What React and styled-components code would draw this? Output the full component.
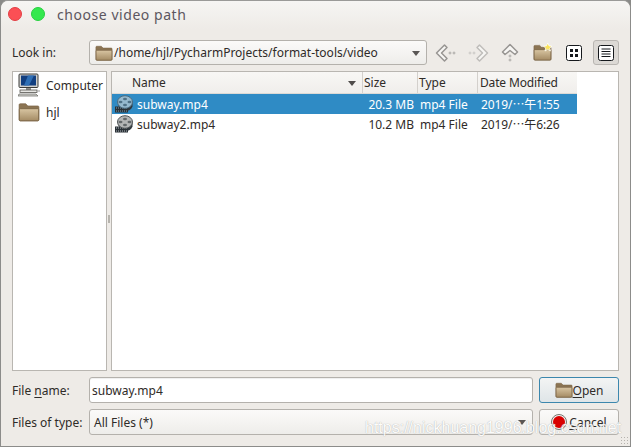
import React from 'react';
import styled, { createGlobalStyle } from 'styled-components';

const Global = createGlobalStyle`
  html, body { margin: 0; padding: 0; background: #8a8a88; }
  body { width: 631px; height: 447px; overflow: hidden; font-family: "Noto Sans", "Noto Sans CJK SC", sans-serif; }
`;
const Win = styled.div`
  position: relative; box-sizing: border-box; width: 631px; height: 447px;
  border: 1px solid #8c8c8a; border-top-color: #9a9a98; border-radius: 8px 8px 0 0;
  background: #eeebe7; color: #2f2b28; display: flex; flex-direction: column; overflow: hidden;
`;
const TitleBar = styled.div`
  height: 28px; box-sizing: border-box; flex: none; display: flex; align-items: center; padding: 0 0 2px 7px;
  background: linear-gradient(#f6f5f3, #eeebe7);
`;
const Light = styled.span`
  width: 14px; height: 14px; border-radius: 50%; flex: none; background: ${p => p.$c};
  box-sizing: border-box; border: 1px solid ${p => p.$b}; margin-right: 9px;
`;
const Title = styled.span`
  font-size: 14px; letter-spacing: 0.55px; color: #5c5660; margin-left: 3px;
`;
const Content = styled.div`
  flex: 1; padding: 11px 11px 0; display: flex; flex-direction: column; min-height: 0;
`;
const Row = styled.div`
  display: flex; align-items: center; margin-top: ${p => p.$mt || 0}px;
`;
const Label = styled.div`width: 77px; flex: none; font-size: 12px; u { text-underline-offset: 2px; }`;
const Combo = styled.div`
  box-sizing: border-box; height: ${p => p.$h || 25}px; width: ${p => p.$w}px; flex: none; display: flex; align-items: center;
  border: 1px solid #b4b1ac; border-radius: 3px; background: linear-gradient(#fbfaf9, #eeedea);
  padding-left: ${p => p.$pl || 5}px; font-size: 12px; position: relative;
`;
const PathText = styled.span`margin-left: 1px;`;
const Arrow = styled.span`
  position: absolute; right: 6px; top: 50%; margin-top: -2px; width: 0; height: 0;
  border-left: 4px solid transparent; border-right: 4px solid transparent; border-top: 5px solid #5a5755;
`;
const Tools = styled.div`display: flex; align-items: center; gap: 6px; margin-left: 6px;`;
const Tool = styled.div`
  box-sizing: border-box; width: 26px; height: 25px; display: flex; align-items: center; justify-content: center;
  ${p => p.$on && 'background:#dcd9d5;border:1px solid #b9b6b2;border-radius:3px;'}
`;
const Panes = styled.div`display: flex; height: 300px; margin-top: 6px; flex: none;`;
const Side = styled.div`
  box-sizing: border-box; width: 95px; flex: none; background: #fff; border: 1px solid #b9b6b1;
  display: flex; flex-direction: column; gap: 1px;
`;
const Splitter = styled.div`
  width: 4px; flex: none; display: flex; align-items: center; justify-content: center;
  &::before {
    content: ""; width: 2px; height: 8px; margin-top: -4px;
    background-image: radial-gradient(#b5b2ad 0.7px, transparent 1px); background-size: 2px 2px;
  }
`;
const Place = styled.div`
  height: 26px; display: flex; align-items: center; font-size: 12px; padding-left: 5px;
  svg { margin-right: 6px; flex: none; }
`;
const Main = styled.div`
  box-sizing: border-box; width: 508px; flex: none; background: #fff; border: 1px solid #b9b6b1;
`;
const Head = styled.div`
  width: 465px; height: 21px; display: flex; background: linear-gradient(#f8f7f5, #f0eeeb); border-bottom: 1px solid #dcdad6;
`;
const HCell = styled.div`
  box-sizing: border-box; width: ${p => p.$w}px; flex: none; font-size: 12px; display: flex; align-items: center; position: relative;
  padding-left: ${p => p.$pl}px; white-space: nowrap; letter-spacing: ${p => p.$ls || 0}px;
  ${p => p.$sep && 'border-right:1px solid #d3d0cc;'}
`;
const SortArrow = styled.span`
  position: absolute; right: 6px; top: 9px; width: 0; height: 0;
  border-left: 4px solid transparent; border-right: 4px solid transparent; border-top: 5px solid #4f4c4a;
`;
const FileRow = styled.div`
  width: 465px; height: 20px; display: flex; align-items: center; font-size: 12px;
  background: ${p => p.$sel ? '#2f8bc5' : 'transparent'}; color: ${p => p.$sel ? '#fff' : '#2f2b28'};
`;
const Cell = styled.div`
  box-sizing: border-box; width: ${p => p.$w}px; flex: none; white-space: nowrap; overflow: hidden;
  padding-left: ${p => p.$pl || 0}px; letter-spacing: ${p => p.$ls || 0}px;
  display: flex; align-items: center; justify-content: ${p => p.$r ? 'flex-end' : 'flex-start'};
  svg { margin-right: 4px; flex: none; }
`;
const Input = styled.div`
  box-sizing: border-box; width: 444px; height: 26px; flex: none; display: flex; align-items: center; background: #fff;
  border: 1px solid #b4b1ac; border-radius: 3px; padding-left: 2px; font-size: 12px; box-shadow: inset 0 1px 1px #eee;
`;
const Btn = styled.div`
  box-sizing: border-box; width: 80px; height: 26px; flex: none; margin-left: 6px; border-radius: 3px;
  border: 1px solid ${p => p.$def ? '#3c87ad' : '#b4b1ac'};
  background: ${p => p.$def ? 'linear-gradient(#f3f4f4, #dfe5e8)' : 'linear-gradient(#fbfaf9, #eeedea)'};
  display: flex; align-items: center; justify-content: center; font-size: 12px;
  u { text-underline-offset: 2px; }
  svg { margin-right: ${p => p.$gap}px; flex: none; }
`;
const Mark = styled.div`
  position: absolute; left: 364px; top: 418px; font-size: 16px; white-space: nowrap; opacity: 0.8;
  color: #fff; text-shadow: 0 0 1px #8c8c8c; font-family: "Liberation Sans", sans-serif;
`;
const Grip = styled.div`
  position: absolute; right: 1px; bottom: 1px; width: 9px; height: 9px;
  background-image: radial-gradient(#b5b2ad 0.8px, transparent 1px); background-size: 3px 3px;
`;

const Folder = ({ s = 20, star }) => (
  <svg width={s} height={s} viewBox="0 0 20 20">
    <defs>
      <linearGradient id="fld" x1="0" y1="0" x2="0" y2="1">
        <stop offset="0" stopColor="#d8c5a2" />
        <stop offset="1" stopColor="#a48b64" />
      </linearGradient>
    </defs>
    <path d="M1 17V3.500a1 1 0 0 1 1-1h5l2 2h9a1 1 0 0 1 1 1V17a1 1 0 0 1-1 1H2a1 1 0 0 1-1-1z" fill="#8b7453" stroke="#7a6445" strokeWidth=".6" />
    <path d="M2 7h16a.8.8 0 0 1 .8.8V17a1 1 0 0 1-1 1H2.200a1 1 0 0 1-1-1V7.800A.8.8 0 0 1 2 7z" fill="url(#fld)" stroke="#7a6445" strokeWidth=".8" />
    {star && <path d="M15.500 0l1.400 3 3.100.3-2.400 2 .8 3.100-2.900-1.700-2.900 1.700.8-3.100-2.400-2 3.100-.3z" fill="#fbe35a" stroke="#fff" strokeWidth=".8" />}
  </svg>
);
const Computer = () => (
  <svg width="22" height="24" viewBox="0 0 22 24">
    <rect x="1" y="1" width="19" height="13.500" rx="1" fill="#cfcfcc" stroke="#3d3d3a" />
    <rect x="3" y="2.500" width="15" height="10" fill="#123f80" />
    <path d="M6 12.500l4-10h6l-5 10z" fill="#2f6fb5" />
    <rect x="8" y="15" width="5" height="2" fill="#8f8f8c" />
    <rect x="2" y="17" width="17" height="2.500" fill="#e6e6e3" stroke="#55544f" strokeWidth=".8" />
    <path d="M1 21h17l2 2H0z" fill="#d5d5d1" stroke="#66655f" strokeWidth=".7" />
    <path d="M19.500 18h2.500" stroke="#999" />
  </svg>
);
const Film = ({ light }) => (
  <svg width="18" height="18" viewBox="0 0 18 18">
    <path d="M3 8h14.500v3.500c-1 3-4 4.500-7 4.500-4 0-7-3-7.500-8z" fill="#30383e" />
    <path d="M0 11.500h13v6H0z" fill="#2a3136" />
    <path d="M1 13h11M1 16h11" stroke={light ? '#7f9fb3' : '#b4bcc1'} strokeDasharray="1 1" />
    <ellipse cx="10" cy="7" rx="7.500" ry="6.300" fill={light ? '#95b8cd' : '#b3b5b5'} stroke={light ? '#4b6a7d' : '#4f5456'} />
    <ellipse cx="10" cy="4" rx="2" ry="1.300" fill={light ? '#4f7186' : '#63686a'} />
    <ellipse cx="5.500" cy="7" rx="2" ry="1.300" fill={light ? '#4f7186' : '#63686a'} />
    <ellipse cx="14.500" cy="7" rx="2" ry="1.300" fill={light ? '#4f7186' : '#63686a'} />
    <ellipse cx="10" cy="10" rx="2" ry="1.300" fill={light ? '#4f7186' : '#63686a'} />
  </svg>
);
const Nav = ({ d, dots, c }) => (
  <svg width="22" height="20" viewBox="0 0 22 20" fill="none">
    <path d={d} stroke={c} strokeWidth="1.500" strokeLinejoin="round" fill="#f7f6f4" />
    {dots.map(([x, y], i) => <circle key={i} cx={x} cy={y} r="1" stroke={c} strokeWidth=".7" fill="none" />)}
  </svg>
);
const Grid = () => (
  <svg width="16" height="16" viewBox="0 0 16 16">
    <rect x=".5" y=".5" width="15" height="15" rx="2" fill="#fff" stroke="#15181c" />
    <path d="M4 4h3v3H4zM9 4h3v3H9zM4 9h3v3H4zM9 9h3v3H9z" fill="#15181c" />
  </svg>
);
const List = () => (
  <svg width="16" height="16" viewBox="0 0 16 16">
    <rect x=".5" y=".5" width="15" height="15" rx="2" fill="#fff" stroke="#15181c" />
    <path d="M3.500 4h9M3.500 6.500h9M3.500 9h9M3.500 11.500h9" stroke="#15181c" strokeWidth="1.200" />
  </svg>
);
const Stop = () => (
  <svg width="16" height="16" viewBox="0 0 16 16">
    <circle cx="8" cy="8" r="7.500" fill="#f4f2f0" stroke="#77736e" />
    <circle cx="8" cy="8" r="6" fill="#d90000" />
  </svg>
);

export default function App() {
  return (
    <>
      <Global />
      <Win>
        <TitleBar>
          <Light $c="#fb4f55" $b="#e23e44" />
          <Light $c="#34e84e" $b="#27cf40" />
          <Title>choose video path</Title>
        </TitleBar>
        <Content>
          <Row>
            <Label>Look in:</Label>
            <Combo $w={338} $h={25}>
              <Folder s={18} />
              <PathText>/home/hjl/PycharmProjects/format-tools/video</PathText>
              <Arrow />
            </Combo>
            <Tools>
              <Tool><Nav c="#979592" d="M9.500 2l-8 8 8 8 2.500-2.500-5.500-5.500 5.500-5.500z" dots={[[15, 10], [19, 10]]} /></Tool>
              <Tool><Nav c="#bfbdba" d="M12.500 2l8 8-8 8-2.500-2.500 5.500-5.500-5.500-5.500z" dots={[[3, 10], [7, 10]]} /></Tool>
              <Tool><Nav c="#979592" d="M11 1.500l7.500 7.500-2.500 2.500-5-4-5 4-2.500-2.500z" dots={[[11, 13], [11, 17]]} /></Tool>
              <Tool><Folder s={19} star /></Tool>
              <Tool><Grid /></Tool>
              <Tool $on><List /></Tool>
            </Tools>
          </Row>
          <Panes>
            <Side>
              <Place><Computer />Computer</Place>
              <Place><Folder s={22} />hjl</Place>
            </Side>
            <Splitter />
            <Main>
              <Head>
                <HCell $w={251} $pl={20} $sep>Name<SortArrow /></HCell>
                <HCell $w={55} $pl={1} $sep>Size</HCell>
                <HCell $w={60} $pl={1} $sep>Type</HCell>
                <HCell $w={99} $pl={2} $ls={-0.15}>Date Modified</HCell>
              </Head>
              <FileRow $sel>
                <Cell $w={250} $pl={3}><Film light />subway.mp4</Cell>
                <Cell $w={52} $r>20.3 MB</Cell>
                <Cell $w={66} $pl={6}>mp4 File</Cell>
                <Cell $w={97} $pl={1} $ls={-0.1}>2019/⋯午1:55</Cell>
              </FileRow>
              <FileRow>
                <Cell $w={250} $pl={3}><Film />subway2.mp4</Cell>
                <Cell $w={52} $r>10.2 MB</Cell>
                <Cell $w={66} $pl={6}>mp4 File</Cell>
                <Cell $w={97} $pl={1} $ls={-0.1}>2019/⋯午6:26</Cell>
              </FileRow>
            </Main>
          </Panes>
          <Row $mt={6}>
            <Label>File <u>n</u>ame:</Label>
            <Input>subway.mp4</Input>
            <Btn $def $gap={0}><Folder s={18} /><span><u>O</u>pen</span></Btn>
          </Row>
          <Row $mt={6}>
            <Label>Files of type:</Label>
            <Combo $w={444} $h={26} $pl={4}>All Files (*)<Arrow /></Combo>
            <Btn $gap={2}><Stop /><span><u>C</u>ancel</span></Btn>
          </Row>
        </Content>
        <Grip />
        <Mark>https://nickhuang1996.blog.csdn.net</Mark>
      </Win>
    </>
  );
}
